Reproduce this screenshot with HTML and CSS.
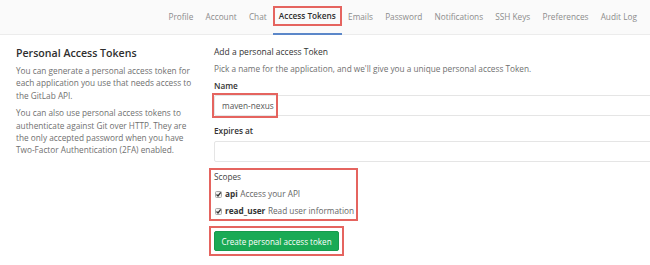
FILE: index.html
```html
<!DOCTYPE html>
<html>
<head>
<meta charset="utf-8">
<link rel="stylesheet" href="styles.css">
</head>
<body>
<nav class="nav">
  <a class="tab">Profile</a>
  <a class="tab">Account</a>
  <a class="tab">Chat</a>
  <a class="tab active"><span class="hl hl-tab">Access Tokens</span></a>
  <a class="tab">Emails</a>
  <a class="tab">Password</a>
  <a class="tab">Notifications</a>
  <a class="tab">SSH Keys</a>
  <a class="tab">Preferences</a>
  <a class="tab">Audit Log</a>
</nav>
<main class="page">
  <section class="side">
    <h3 class="side-title">Personal Access Tokens</h3>
    <p class="side-text">You can generate a personal access token for each application you use that needs access to the GitLab API.</p>
    <p class="side-text">You can also use personal access tokens to authenticate against Git over HTTP. They are the only accepted password when you have Two-Factor Authentication (2FA) enabled.</p>
  </section>
  <section class="form">
    <h4 class="form-title">Add a personal access Token</h4>
    <p class="hint">Pick a name for the application, and we'll give you a unique personal access Token.</p>
    <label class="label">Name</label>
    <div class="field hl hl-input">maven-nexus</div>
    <label class="label label-exp">Expires at</label>
    <div class="field field-exp"></div>
    <div class="scopes hl hl-scopes">
      <div class="label">Scopes</div>
      <div class="scope"><svg class="cb" width="7" height="7" viewBox="0 0 7 7"><rect x="0.5" y="0.5" width="6" height="6" rx="1" fill="#f2f2f2" stroke="#a8a8a8"/><path d="M1.5 3.6 L3 5 L5.8 1.4" fill="none" stroke="#333" stroke-width="1.3"/></svg><b>api</b> Access your API</div>
      <div class="scope"><svg class="cb" width="7" height="7" viewBox="0 0 7 7"><rect x="0.5" y="0.5" width="6" height="6" rx="1" fill="#f2f2f2" stroke="#a8a8a8"/><path d="M1.5 3.6 L3 5 L5.8 1.4" fill="none" stroke="#333" stroke-width="1.3"/></svg><b>read_user</b> Read user information</div>
    </div>
    <div class="actions hl hl-btn"><button class="btn">Create personal access token</button></div>
  </section>
</main>
</body>
</html>
```
FILE: styles.css
```css
html, body {
  margin: 0;
  padding: 0;
  background: #fff;
  overflow: hidden;
}
body {
  width: 650px;
  height: 265px;
  font-family: "Open Sans", "Noto Sans", sans-serif;
  font-size: 8.25px;
  color: #333;
}
.nav {
  display: flex;
  justify-content: flex-end;
  height: 34px;
  background: #fafafa;
  border-bottom: 1px solid #ececec;
  padding-right: 7px;
}
.tab {
  display: flex;
  align-items: center;
  padding: 0 6.1px;
  color: #8c8c8c;
  border-bottom: 2px solid transparent;
  box-sizing: border-box;
  height: 35px;
  padding-bottom: 1px;
}
.tab.active {
  color: #2e2e2e;
  font-weight: 600;
  border-bottom-color: #5b87c9;
}
.hl {
  position: relative;
}
.hl::after {
  content: "";
  position: absolute;
  border: 2px solid #e5645f;
  pointer-events: none;
}
.hl-tab {
  display: block;
  line-height: 12px;
}
.hl-tab::after {
  left: -6px;
  right: -6px;
  top: -4px;
  bottom: -4px;
}
.page {
  display: grid;
  grid-template-columns: 184px 480px;
  column-gap: 14px;
  padding-left: 16px;
  padding-top: 9px;
}
.side {
  padding-top: 2px;
}
.side-title {
  margin: 0;
  font-size: 10.6px;
  font-weight: 600;
  line-height: 15px;
  color: #2e2e2e;
}
.side-text {
  margin: 5.5px 0 0;
  color: #707070;
  line-height: 12.3px;
}
.side-title + .side-text {
  margin-top: 4px;
}
.form {
  display: flex;
  flex-direction: column;
  align-items: flex-start;
  padding-top: 1.5px;
}
.form-title {
  margin: 0;
  font-weight: 400;
  font-size: 8.5px;
  line-height: 12px;
  color: #333;
}
.hint {
  margin: 5.5px 0 0;
  color: #707070;
  line-height: 12px;
}
.label {
  margin-top: 4.5px;
  font-weight: 600;
  line-height: 12px;
  color: #333;
}
.field {
  margin-top: 3px;
  width: 470px;
  height: 21px;
  box-sizing: border-box;
  border: 1px solid #e5e5e5;
  border-radius: 2px;
  padding-left: 7px;
  display: flex;
  align-items: center;
  color: #555;
}
.hl-input::after {
  left: -3px;
  top: -2.5px;
  width: 62px;
  height: 21px;
}
.label-exp {
  margin-top: 9px;
}
.field-exp {
  margin-top: 4.5px;
}
.scopes {
  margin-top: 8px;
  display: flex;
  flex-direction: column;
  padding-bottom: 1px;
}
.scopes .label {
  margin-top: 1px;
  font-weight: 400;
  color: #444;
}
.hl-scopes::after {
  left: -5px;
  right: -4px;
  top: -2px;
  bottom: -3px;
}
.scope {
  display: flex;
  align-items: center;
  margin-top: 5px;
  line-height: 12px;
  color: #666;
}
.scope b {
  color: #333;
  font-weight: 700;
  margin-right: 2.5px;
}
.cb {
  margin-left: 1px;
  margin-right: 3px;
  flex: none;
}
.actions {
  margin-top: 13px;
}
.btn {
  display: block;
  width: 125px;
  height: 20px;
  padding: 0;
  border: 1px solid #179a4d;
  border-radius: 2px;
  background: #1aaa55;
  color: #fff;
  font-family: inherit;
  font-size: 8.1px;
}
.hl-btn::after {
  left: -5px;
  right: -5px;
  top: -5px;
  bottom: -5px;
}
```
